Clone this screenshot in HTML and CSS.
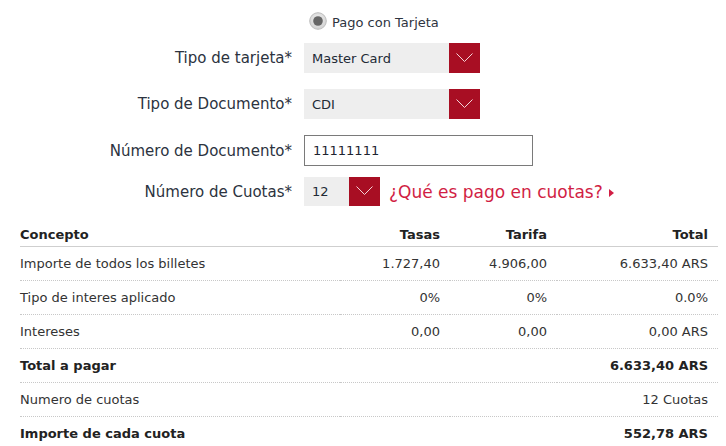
FILE: index.html
```html
<!DOCTYPE html>
<html lang="es">
<head>
<meta charset="utf-8">
<title>Pago con Tarjeta</title>
<link rel="stylesheet" href="styles.css">
</head>
<body>
<div class="page">
  <div class="radio-row">
    <svg class="radio" width="18" height="18" viewBox="0 0 18 18">
      <defs>
        <radialGradient id="rg" cx="50%" cy="40%" r="60%">
          <stop offset="0" stop-color="#f2f2f2"/>
          <stop offset="1" stop-color="#d0d0d0"/>
        </radialGradient>
      </defs>
      <circle cx="9" cy="9" r="8.3" fill="url(#rg)" stroke="#bdbdbd" stroke-width="1"/>
      <circle cx="9" cy="9" r="4.8" fill="#666666"/>
    </svg>
    <span class="radio-label">Pago con Tarjeta</span>
  </div>

  <div class="form">
    <div class="row row-1">
      <label class="label">Tipo de tarjeta*</label>
      <div class="select wide">
        <span class="select-value">Master Card</span>
        <span class="select-btn"><svg width="17" height="10" viewBox="0 0 17 10"><path d="M0.5 0.5 L8.5 8.5 L16.5 0.5" fill="none" stroke="#f3d4d8" stroke-width="1"/></svg></span>
      </div>
    </div>
    <div class="row row-2">
      <label class="label">Tipo de Documento*</label>
      <div class="select wide">
        <span class="select-value">CDI</span>
        <span class="select-btn"><svg width="17" height="10" viewBox="0 0 17 10"><path d="M0.5 0.5 L8.5 8.5 L16.5 0.5" fill="none" stroke="#f3d4d8" stroke-width="1"/></svg></span>
      </div>
    </div>
    <div class="row row-3">
      <label class="label">Número de Documento*</label>
      <div class="input">11111111</div>
    </div>
    <div class="row row-4">
      <label class="label">Número de Cuotas*</label>
      <div class="select narrow">
        <span class="select-value">12</span>
        <span class="select-btn"><svg width="17" height="10" viewBox="0 0 17 10"><path d="M0.5 0.5 L8.5 8.5 L16.5 0.5" fill="none" stroke="#f3d4d8" stroke-width="1"/></svg></span>
      </div>
      <a class="link" href="#">¿Qué es pago en cuotas? <svg class="tri" width="5" height="8" viewBox="0 0 5 8"><path d="M0 0 L5 4 L0 8 Z" fill="#d11e44"/></svg></a>
    </div>
  </div>

  <table class="summary">
    <colgroup>
      <col class="c1"><col class="c2"><col class="c3"><col class="c4">
    </colgroup>
    <thead>
      <tr><th class="l">Concepto</th><th>Tasas</th><th>Tarifa</th><th>Total</th></tr>
    </thead>
    <tbody>
      <tr><td class="l">Importe de todos los billetes</td><td>1.727,40</td><td>4.906,00</td><td>6.633,40 ARS</td></tr>
      <tr><td class="l">Tipo de interes aplicado</td><td>0%</td><td>0%</td><td>0.0%</td></tr>
      <tr><td class="l">Intereses</td><td>0,00</td><td>0,00</td><td>0,00 ARS</td></tr>
      <tr class="strong"><td class="l">Total a pagar</td><td></td><td></td><td>6.633,40 ARS</td></tr>
      <tr><td class="l">Numero de cuotas</td><td></td><td></td><td>12 Cuotas</td></tr>
      <tr class="strong last"><td class="l">Importe de cada cuota</td><td></td><td></td><td>552,78 ARS</td></tr>
    </tbody>
  </table>
</div>
</body>
</html>
```

FILE: styles.css
```css
html, body {
  margin: 0;
  padding: 0;
  background: #ffffff;
}
body {
  font-family: "DejaVu Sans", Verdana, sans-serif;
  color: #333333;
}
.page {
  width: 726px;
  padding-top: 11px;
}
.radio-row {
  display: flex;
  align-items: center;
  height: 20px;
  padding-left: 309px;
  gap: 5px;
}
.radio { display: block; }
.radio-label {
  font-size: 13px;
  color: #2e3440;
  padding-top: 2px;
}
.form {
  display: flex;
  flex-direction: column;
  margin-top: 12px;
}
.row {
  display: grid;
  grid-template-columns: 292px auto auto;
  column-gap: 12px;
  align-items: center;
  justify-content: start;
}
.row-2 { margin-top: 16px; }
.row-3 { margin-top: 16px; }
.row-4 { margin-top: 11px; }
.label {
  text-align: right;
  font-size: 15px;
  color: #2c3340;
  white-space: nowrap;
}
.select {
  display: flex;
  height: 30px;
  background: #eeeeee;
}
.select.wide { width: 176px; }
.select.narrow { width: 76px; height: 29px; }
.select-value {
  flex: 1;
  display: flex;
  align-items: center;
  padding-left: 8px;
  font-size: 13px;
  color: #222a35;
}
.select-btn {
  width: 31px;
  background: #a80e23;
  display: flex;
  align-items: center;
  justify-content: center;
}
.select-btn svg { display: block; margin-top: -1px; }
.input {
  box-sizing: border-box;
  width: 229px;
  height: 31px;
  border: 1px solid #7a7a7a;
  display: flex;
  align-items: center;
  padding-left: 8px;
  font-size: 13px;
  color: #1e2430;
  background: #fff;
}
.link {
  margin-left: -3px;
  font-size: 17px;
  color: #d11e44;
  text-decoration: none;
  display: flex;
  align-items: center;
  gap: 6px;
  white-space: nowrap;
}
.tri { display: block; margin-top: 2px; }
.summary {
  margin-top: 13px;
  margin-left: 20px;
  width: 698px;
  border-collapse: collapse;
  table-layout: fixed;
  font-size: 13px;
}
.c1 { width: 320px; }
.c2 { width: 110px; }
.c3 { width: 107px; }
.c4 { width: 161px; }
.summary th {
  height: 23px;
  padding: 4px 10px 0 0;
  text-align: right;
  font-weight: bold;
  color: #222222;
  border-bottom: 1px solid #cfcfcf;
  vertical-align: middle;
}
.summary td {
  height: 33px;
  padding: 0 10px 0 0;
  text-align: right;
  border-bottom: 1px dotted #c8c8c8;
  vertical-align: middle;
  color: #333333;
}
.summary td:first-child, .summary th:first-child { padding-left: 0; }
.summary .l { text-align: left; }
.summary tr.strong td { font-weight: bold; color: #222222; }
.summary tr.last td { border-bottom: none; }
```
